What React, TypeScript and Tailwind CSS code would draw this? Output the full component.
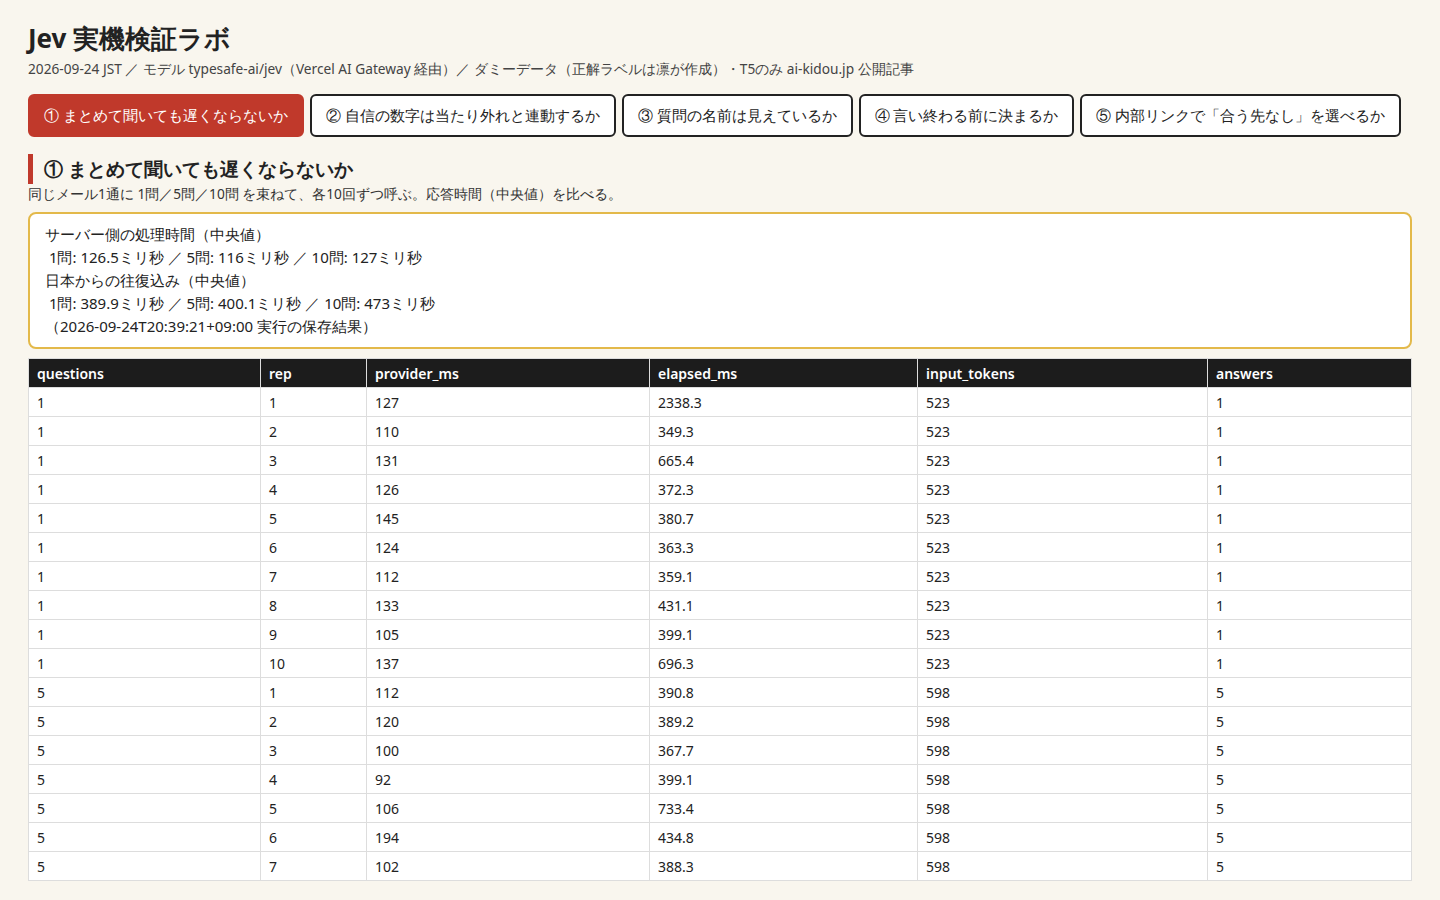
const tabs = [
  "① まとめて聞いても遅くならないか",
  "② 自信の数字は当たり外れと連動するか",
  "③ 質問の名前は見えているか",
  "④ 言い終わる前に決まるか",
  "⑤ 内部リンクで「合う先なし」を選べるか",
];

const rows: (string | number)[][] = [
  [1, 1, 127, "2338.3", 523, 1],
  [1, 2, 110, "349.3", 523, 1],
  [1, 3, 131, "665.4", 523, 1],
  [1, 4, 126, "372.3", 523, 1],
  [1, 5, 145, "380.7", 523, 1],
  [1, 6, 124, "363.3", 523, 1],
  [1, 7, 112, "359.1", 523, 1],
  [1, 8, 133, "431.1", 523, 1],
  [1, 9, 105, "399.1", 523, 1],
  [1, 10, 137, "696.3", 523, 1],
  [5, 1, 112, "390.8", 598, 5],
  [5, 2, 120, "389.2", 598, 5],
  [5, 3, 100, "367.7", 598, 5],
  [5, 4, 92, "399.1", 598, 5],
  [5, 5, 106, "733.4", 598, 5],
  [5, 6, 194, "434.8", 598, 5],
  [5, 7, 102, "388.3", 598, 5],
];

const cols = ["questions", "rep", "provider_ms", "elapsed_ms", "input_tokens", "answers"];
const widths = ["w-[232px]", "w-[106px]", "w-[283px]", "w-[268px]", "w-[290px]", ""];

export default function App() {
  return (
    <div className="min-h-screen bg-[#f9f6ee] text-[#222] px-[28px] pt-[22px] font-['Inter','Noto_Sans_CJK_JP',sans-serif]">
      <h1 className="text-[26px] font-bold leading-[32px]">Jev 実機検証ラボ</h1>
      <p className="mt-[6px] text-[13.7px] leading-[18px] text-[#444]">
        2026-09-24 JST ／ モデル typesafe-ai/jev（Vercel AI Gateway 経由）／ ダミーデータ（正解ラベルは凛が作成）・T5のみ ai-kidou.jp 公開記事
      </p>
      <div className="mt-[16px] flex gap-[6px]">
        {tabs.map((t, i) => (
          <button
            key={t}
            className={
              "h-[43px] px-[14px] rounded-[6px] border-2 text-[14.8px] " +
              (i === 0 ? "bg-[#c0392b] border-[#c0392b] text-white" : "bg-white border-[#222] text-[#222]")
            }
          >
            {t}
          </button>
        ))}
      </div>
      <h2 className="mt-[17px] border-l-[5px] border-[#c0392b] pl-[11px] text-[19px] font-bold leading-[30px]">
        ① まとめて聞いても遅くならないか
      </h2>
      <p className="mt-[1px] text-[13.7px] leading-[18px] text-[#333]">
        同じメール1通に 1問／5問／10問 を束ねて、各10回ずつ呼ぶ。応答時間（中央値）を比べる。
      </p>
      <div className="mt-[9px] rounded-[8px] border-2 border-[#e3b94a] bg-white px-[15px] py-[9px] text-[15px] leading-[23px]">
        <div>サーバー側の処理時間（中央値）</div>
        <div>&nbsp;1問: 126.5ミリ秒 ／ 5問: 116ミリ秒 ／ 10問: 127ミリ秒</div>
        <div>日本からの往復込み（中央値）</div>
        <div>&nbsp;1問: 389.9ミリ秒 ／ 5問: 400.1ミリ秒 ／ 10問: 473ミリ秒</div>
        <div>（2026-09-24T20:39:21+09:00 実行の保存結果）</div>
      </div>
      <table className="mt-[9px] w-full border-collapse bg-white text-[14px] border border-[#ddd]">
        <thead>
          <tr className="bg-[#1c1c1c] text-white">
            {cols.map((c, i) => (
              <th key={c} className={"h-[29px] px-[8px] text-left font-semibold border border-[#ddd] " + widths[i]}>
                {c}
              </th>
            ))}
          </tr>
        </thead>
        <tbody>
          {rows.map((r, ri) => (
            <tr key={ri}>
              {r.map((v, ci) => (
                <td key={ci} className="h-[29px] px-[8px] border border-[#ddd]">
                  {v}
                </td>
              ))}
            </tr>
          ))}
        </tbody>
      </table>
    </div>
  );
}
